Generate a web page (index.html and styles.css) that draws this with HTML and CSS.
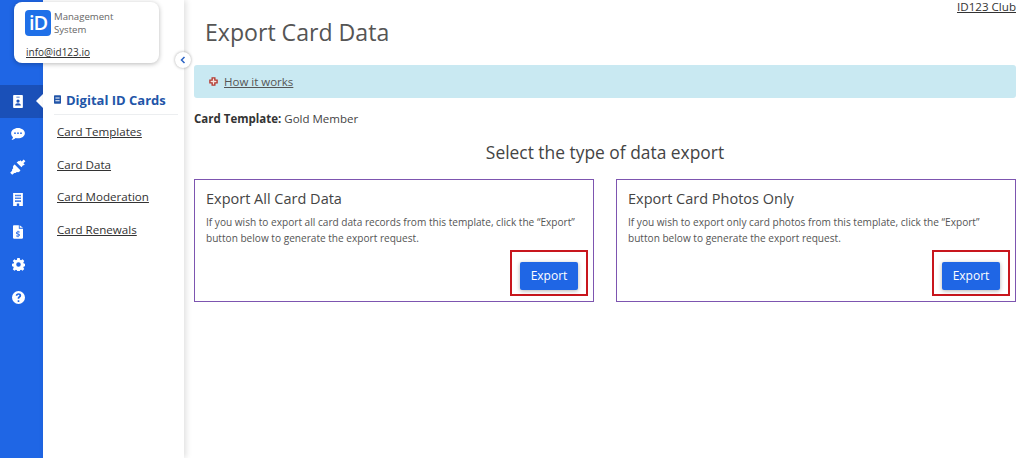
FILE: index.html
```html
<!DOCTYPE html>
<html lang="en">
<head>
<meta charset="utf-8">
<title>Export Card Data</title>
<link rel="stylesheet" href="styles.css">
</head>
<body>
<div class="app">
  <nav class="rail">
    <a class="rail-item active"><svg viewBox="0 0 12 16" width="10" height="13"><path fill="#fff" fill-rule="evenodd" d="M1 0h10a1 1 0 0 1 1 1v14a1 1 0 0 1-1 1H1a1 1 0 0 1-1-1V1a1 1 0 0 1 1-1zM4 2v1h4V2zM6 5.500a2 2 0 1 0 0 4 2 2 0 0 0 0-4zM2.500 13h7c0-2-1.500-2.800-3.500-2.800S2.500 11 2.500 13z"/></svg></a>
    <a class="rail-item"><svg viewBox="0 0 16 14" width="14" height="12"><path fill="#fff" fill-rule="evenodd" d="M8 0c4.400 0 8 2.700 8 6s-3.600 6-8 6c-1 0-1.900-.1-2.800-.4C4 12.600 2.400 13.600.5 14c.9-1 1.500-2.200 1.700-3.400C.8 9.500 0 7.800 0 6c0-3.300 3.600-6 8-6zM4.500 5a1 1 0 1 0 0 2 1 1 0 0 0 0-2zM8 5a1 1 0 1 0 0 2 1 1 0 0 0 0-2zM11.500 5a1 1 0 1 0 0 2 1 1 0 0 0 0-2z"/></svg></a>
    <a class="rail-item"><svg viewBox="0 0 16 16" width="16" height="16"><path fill="#fff" d="M9.500 2.200l.9-.9 1.300 1.300L13.700.6l1.700 1.700-2 2 1.300 1.300-.9.900-.6-.6-1.700 2.400-4.900-4.900 2.400-1.700zM4.700 5.600l5.700 5.700-.5.900-1.600 1-1.500-.3-1.300 1.100-1.200 0L2.200 15.800.2 13.800l1.900-2.100 0-1.200 1.100-1.300-.3-1.500 1-1.600z"/></svg></a>
    <a class="rail-item"><svg viewBox="0 0 12 16" width="10" height="13"><path fill="#fff" fill-rule="evenodd" d="M0 0h12v16H7.500v-3h-3v3H0zM2.500 2v2h2V2zM5 2v2h2V2zM7.500 2v2h2V2zM2.500 5.500v2h2v-2zM5 5.500v2h2v-2zM7.500 5.500v2h2v-2zM2.500 9v2h2V9zM5 9v2h2V9zM7.500 9v2h2V9z"/></svg></a>
    <a class="rail-item"><svg viewBox="0 0 12 16" width="10" height="14"><path fill="#fff" fill-rule="evenodd" d="M1 0h6v4h5v11a1 1 0 0 1-1 1H1a1 1 0 0 1-1-1V1a1 1 0 0 1 1-1zM8 0l4 3H8zM5.500 6.500v1C4.300 7.700 3.700 8.400 3.700 9.300c0 1 .8 1.400 1.800 1.700l1 .3c.3.100.5.200.5.500s-.3.500-.8.500H3.800v1.100h1.700v1h1v-1c1.100-.2 1.700-.9 1.700-1.800 0-1-.7-1.400-1.700-1.700l-1-.3c-.4-.1-.6-.3-.6-.5 0-.3.300-.5.700-.5H8V7.500H6.500v-1z"/></svg></a>
    <a class="rail-item"><svg viewBox="0 0 16 16" width="13" height="13"><path fill="#fff" fill-rule="evenodd" d="M6.500 0h3l.4 2.100 1.300.6L13 1.500l2.100 2.100-1.200 1.800.6 1.300 2 .4v3l-2 .4-.6 1.300 1.200 1.800-2.100 2.100-1.800-1.200-1.300.6-.4 1.900h-3l-.4-1.900-1.300-.6L3 15.800.9 13.700l1.200-1.800-.6-1.300-1.500-.4v-3l2-.4.600-1.300L.9 3.600 3 1.500l1.800 1.200 1.300-.6zM8 5.300a2.800 2.800 0 1 0 0 5.600 2.800 2.800 0 0 0 0-5.600z"/></svg></a>
    <a class="rail-item"><svg viewBox="0 0 16 16" width="13" height="13"><path fill="#fff" fill-rule="evenodd" d="M8 0a8 8 0 1 1 0 16A8 8 0 0 1 8 0zM7 11.500v2h2v-2zM8 2.800C6 2.800 4.700 3.900 4.600 5.700h2.100c.1-.7.500-1.100 1.200-1.100s1.200.4 1.200 1c0 .5-.3.800-.9 1.200-.9.600-1.200 1.200-1.200 2.200v.6h2v-.4c0-.6.200-.9.900-1.300.9-.6 1.400-1.300 1.400-2.400 0-1.600-1.300-2.700-3.300-2.700z"/></svg></a>
  </nav>
  <aside class="panel">
    <div class="panel-title">
      <svg viewBox="0 0 10 12" width="7" height="9"><path fill="#2255a8" fill-rule="evenodd" d="M1 0h8a1 1 0 0 1 1 1v10a1 1 0 0 1-1 1H1a1 1 0 0 1-1-1V1a1 1 0 0 1 1-1zM2 3v1.500h6V3zM2 7v1.500h6V7z"/></svg>
      <span>Digital ID Cards</span>
    </div>
    <ul class="panel-links">
      <li><a href="#">Card Templates</a></li>
      <li><a href="#">Card Data</a></li>
      <li><a href="#">Card Moderation</a></li>
      <li><a href="#">Card Renewals</a></li>
    </ul>
  </aside>
  <main class="main">
    <a class="club" href="#">ID123 Club</a>
    <h1>Export Card Data</h1>
    <div class="notice">
      <svg viewBox="0 0 10 10" width="9" height="9"><path fill="#f6e6e0" stroke="#b5382f" stroke-width="1.500" d="M3.500 1h3v2.500H9v3H6.500V9h-3V6.500H1v-3h2.500z"/></svg>
      <a href="#">How it works</a>
    </div>
    <p class="template"><b>Card Template:</b> Gold Member</p>
    <h2>Select the type of data export</h2>
    <div class="cards">
      <section class="card">
        <h3>Export All Card Data</h3>
        <p>If you wish to export all card data records from this template, click the “Export” button below to generate the export request.</p>
        <div class="action"><div class="highlight"><button>Export</button></div></div>
      </section>
      <section class="card">
        <h3>Export Card Photos Only</h3>
        <p>If you wish to export only card photos from this template, click the “Export” button below to generate the export request.</p>
        <div class="action"><div class="highlight"><button>Export</button></div></div>
      </section>
    </div>
  </main>
  <div class="brand">
    <div class="brand-top">
      <span class="logo">iD</span>
      <span class="brand-name">Management<br>System</span>
    </div>
    <a class="brand-mail" href="#">info@id123.io</a>
  </div>
  <div class="collapse"><svg viewBox="0 0 8 10" width="6" height="8"><path fill="none" stroke="#2a62c4" stroke-width="2" d="M6 1L2 5l4 4"/></svg></div>
</div>
</body>
</html>
```
FILE: styles.css
```css
* { box-sizing: border-box; }
html, body { margin: 0; height: 100%; }
body { font-family: "Open Sans", sans-serif; color: #444; background: #fff; overflow: hidden; }
a { color: #333; }
.app { position: relative; display: flex; height: 458px; }

.rail { width: 43px; flex: none; background: #1f66e5; padding-top: 85px; }
.rail-item { display: flex; align-items: center; justify-content: center; height: 32.7px; padding-right: 7px; position: relative; }
.rail-item.active { background: #1a50b8; }
.rail-item.active::after { content: ""; position: absolute; right: 0; top: 9px; border: 7px solid transparent; border-left: 0; border-right: 7px solid #fff; }

.panel { width: 141px; flex: none; background: #fff; box-shadow: 2px 0 6px rgba(0,0,0,.13); padding: 91px 6px 0 11px; position: relative; }
.panel-title { display: flex; align-items: center; gap: 5px; height: 24px; padding-bottom: 6px; border-bottom: 1px solid #eceef0; color: #2255a8; font-size: 13px; font-weight: 700; white-space: nowrap; }
.panel-links { list-style: none; margin: 0; padding: 0 0 0 3px; }
.panel-links li { height: 32.7px; font-size: 11.6px; line-height: 33px; }

.main { flex: 1; padding: 0 8px 0 10px; position: relative; }
.club { position: absolute; top: -1px; right: 8px; font-size: 11.6px; line-height: 16px; }
h1 { margin: 0; padding: 16px 0 0 11px; height: 65px; font-size: 23.1px; line-height: 32px; font-weight: 400; color: #555; }
.notice { display: flex; align-items: center; gap: 6px; height: 33px; padding-left: 15px; background: #c9e9f2; border-radius: 3px; font-size: 11.5px; }
.notice a { color: #555; }
.template { margin: 0; padding-top: 13px; height: 39px; font-size: 11.5px; line-height: 16px; color: #444; }
.template b { color: #333; }
h2 { margin: 0; height: 42px; font-size: 17.4px; line-height: 30px; font-weight: 400; text-align: center; color: #444; }
.cards { display: grid; grid-template-columns: 400px 400px; justify-content: space-between; }
.card { height: 123px; border: 1px solid #7d55b0; padding: 9px 12px 0 11px; position: relative; display: flex; flex-direction: column; }
.card h3 { margin: 0; font-size: 14.5px; line-height: 20px; font-weight: 400; color: #444; }
.card p { margin: 5px 0 0; font-size: 10.1px; line-height: 16px; color: #555; }
.action { margin-top: auto; display: flex; justify-content: flex-end; margin-right: -7px; margin-bottom: 5px; }
.highlight { width: 78px; height: 46px; border: 2.5px solid #c8161d; padding: 9.5px 7.5px 4px; display: flex; justify-content: center; }
.highlight button { width: 58px; height: 28px; border: 0; border-radius: 2px; background: #1f66e5; color: #fff; font: 12px "Open Sans", sans-serif; box-shadow: 0 1px 4px rgba(0,0,0,.3); padding: 0; }

.brand { position: absolute; left: 14px; top: 2px; width: 145px; height: 61px; background: #fff; border-radius: 8px; box-shadow: 0 1px 5px rgba(0,0,0,.28); padding: 8px 0 0 11px; }
.brand-top { display: flex; gap: 3px; }
.logo { width: 26px; height: 26px; border-radius: 4px; background: #1f70e8; color: #fff; font-size: 20px; font-weight: 600; line-height: 26px; text-align: center; letter-spacing: -1px; }
.brand-name { font-size: 9.6px; line-height: 13px; color: #666; }
.brand-mail { display: block; margin: 9px 0 0 1px; font-size: 10px; line-height: 14px; color: #333; }
.collapse { position: absolute; left: 175px; top: 52px; width: 16px; height: 16px; border-radius: 50%; background: #fff; box-shadow: 0 0 3px rgba(0,0,0,.35); display: flex; align-items: center; justify-content: center; }
```
